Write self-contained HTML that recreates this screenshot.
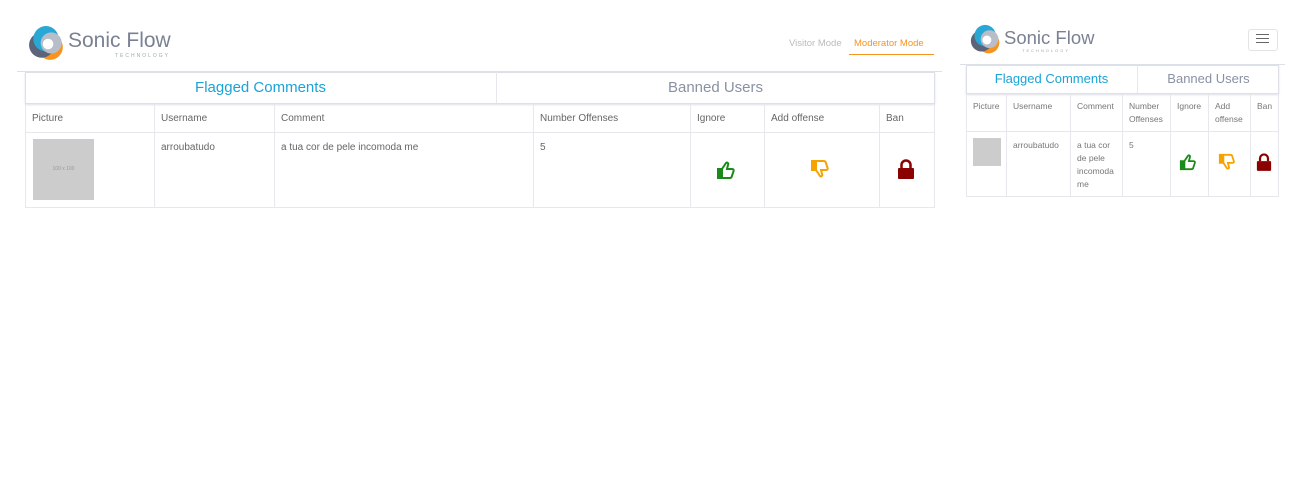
<!DOCTYPE html><html><head><style>
body{margin:0;width:1301px;height:487px;background:#fff;font-family:"Liberation Sans",sans-serif;position:relative;overflow:hidden}
.a{position:absolute}
.t{color:#666;font-size:10px}
.h{color:#666;font-size:10px}
.vl{position:absolute;width:1px;background:#e6e8ee}
.hl{position:absolute;height:1px;background:#e6e8ee}
</style></head><body>
<svg class="a" style="left:28px;top:25px" width="38" height="38" viewBox="0 0 36 36"><circle cx="21" cy="21" r="12" fill="#f7941d"/><circle cx="13" cy="19" r="12" fill="#5b6478"/><circle cx="17" cy="13" r="12" fill="#29a8d6"/><circle cx="22" cy="17" r="10" fill="#b8bec9"/><circle cx="19" cy="18" r="5" fill="#fff"/></svg>
<div class="a" style="left:68px;top:29px;font-size:21px;color:#7a8193">Sonic Flow</div>
<div class="a" style="left:115px;top:53px;font-size:5px;letter-spacing:2px;color:#9aa">TECHNOLOGY</div>
<div class="a" style="left:789px;top:38px;font-size:9.5px;color:#bbb">Visitor Mode</div>
<div class="a" style="left:854px;top:38px;font-size:9.5px;color:#f7941d">Moderator Mode</div>
<div class="a" style="left:849px;top:54px;width:85px;height:1px;background:#f7941d"></div>
<div class="hl" style="left:17px;top:71px;width:925px;background:#dde0e8"></div>
<div class="a" style="left:25px;top:72px;width:908px;height:30px;border:1px solid #dde0e8;box-shadow:0 1px 2px #dde0e8"></div>
<div class="vl" style="left:496px;top:72px;height:31px"></div>
<div class="a" style="left:25px;top:79px;width:471px;text-align:center;font-size:15px;color:#1aa3d6">Flagged Comments</div>
<div class="a" style="left:497px;top:79px;width:437px;text-align:center;font-size:15px;color:#8a91a3">Banned Users</div>
<div class="a" style="left:25px;top:104px;width:908px;height:103px;border:1px solid #e6e8ee;border-top:none"></div>
<div class="hl" style="left:25px;top:132px;width:909px"></div>
<div class="vl" style="left:154px;top:104px;height:103px"></div><div class="vl" style="left:274px;top:104px;height:103px"></div><div class="vl" style="left:533px;top:104px;height:103px"></div><div class="vl" style="left:690px;top:104px;height:103px"></div><div class="vl" style="left:764px;top:104px;height:103px"></div><div class="vl" style="left:879px;top:104px;height:103px"></div>
<div class="a h" style="left:32px;top:113px">Picture</div><div class="a h" style="left:161px;top:113px">Username</div><div class="a h" style="left:281px;top:113px">Comment</div><div class="a h" style="left:540px;top:113px">Number Offenses</div><div class="a h" style="left:697px;top:113px">Ignore</div><div class="a h" style="left:771px;top:113px">Add offense</div><div class="a h" style="left:886px;top:113px">Ban</div>
<div class="a" style="left:33px;top:139px;width:61px;height:61px;background:#ccc;color:#999;font-size:5px;text-align:center;line-height:61px">100 x 100</div>
<div class="a t" style="left:161px;top:142px">arroubatudo</div><div class="a t" style="left:281px;top:142px">a tua cor de pele incomoda me</div><div class="a t" style="left:540px;top:142px">5</div>
<svg class="a" style="left:716px;top:160px" width="20" height="20" viewBox="0 0 20 20"><path d="M2 9h4v9H2z M6 9l4-6c1-1 3 0 2 2l-1 4h5c1.5 0 2 1 1.6 2l-2 6c-.4.8-1 1-2 1H6" fill="none" stroke="#1a8a1a" stroke-width="2"/><rect x="2" y="9" width="4" height="9" fill="#1a8a1a"/></svg>
<svg class="a" style="left:810px;top:159px" width="20" height="20" viewBox="0 0 20 20" transform="scale(1,-1)"><path d="M2 9h4v9H2z M6 9l4-6c1-1 3 0 2 2l-1 4h5c1.5 0 2 1 1.6 2l-2 6c-.4.8-1 1-2 1H6" fill="none" stroke="#f5a300" stroke-width="2"/><rect x="2" y="9" width="4" height="9" fill="#f5a300"/></svg>
<svg class="a" style="left:897px;top:158px" width="18" height="22" viewBox="0 0 18 22"><path d="M4.5 10V7a4.5 4.5 0 0 1 9 0v3" fill="none" stroke="#8b0000" stroke-width="2.5"/><rect x="1" y="10" width="16" height="11" rx="1" fill="#8b0000"/></svg>
<svg class="a" style="left:970px;top:24px" width="32" height="32" viewBox="0 0 36 36"><circle cx="21" cy="21" r="12" fill="#f7941d"/><circle cx="13" cy="19" r="12" fill="#5b6478"/><circle cx="17" cy="13" r="12" fill="#29a8d6"/><circle cx="22" cy="17" r="10" fill="#b8bec9"/><circle cx="19" cy="18" r="5" fill="#fff"/></svg>
<div class="a" style="left:1004px;top:27px;font-size:18.5px;color:#7a8193">Sonic Flow</div>
<div class="a" style="left:1022px;top:48px;font-size:4px;letter-spacing:2px;color:#9aa">TECHNOLOGY</div>
<div class="a" style="left:1248px;top:29px;width:28px;height:20px;border:1px solid #e3e3e3;border-radius:3px"></div>
<div class="a" style="left:1256px;top:34px;width:13px;height:1px;background:#666;box-shadow:0 4px 0 #666,0 8px 0 #666"></div>
<div class="hl" style="left:960px;top:64px;width:325px;background:#dde0e8"></div>
<div class="a" style="left:966px;top:65px;width:311px;height:27px;border:1px solid #dde0e8;box-shadow:0 1px 2px #dde0e8"></div>
<div class="vl" style="left:1137px;top:65px;height:28px"></div>
<div class="a" style="left:966px;top:71px;width:171px;text-align:center;font-size:13px;color:#1aa3d6">Flagged Comments</div>
<div class="a" style="left:1138px;top:71px;width:141px;text-align:center;font-size:13px;color:#8a91a3">Banned Users</div>
<div class="a" style="left:966px;top:94px;width:311px;height:102px;border:1px solid #e6e8ee;border-top:none"></div>
<div class="hl" style="left:966px;top:131px;width:312px"></div>
<div class="vl" style="left:1006px;top:94px;height:102px"></div><div class="vl" style="left:1070px;top:94px;height:102px"></div><div class="vl" style="left:1122px;top:94px;height:102px"></div><div class="vl" style="left:1170px;top:94px;height:102px"></div><div class="vl" style="left:1208px;top:94px;height:102px"></div><div class="vl" style="left:1250px;top:94px;height:102px"></div>
<div class="a" style="font-size:8.5px;color:#777;line-height:13px">
<div class="a" style="left:973px;top:100px">Picture</div><div class="a" style="left:1013px;top:100px">Username</div><div class="a" style="left:1077px;top:100px">Comment</div><div class="a" style="left:1129px;top:100px;width:40px">Number Offenses</div><div class="a" style="left:1177px;top:100px">Ignore</div><div class="a" style="left:1215px;top:100px;width:30px">Add offense</div><div class="a" style="left:1257px;top:100px">Ban</div>
<div class="a" style="left:1013px;top:139px">arroubatudo</div><div class="a" style="left:1077px;top:139px;width:44px">a tua cor de pele incomoda me</div><div class="a" style="left:1129px;top:139px">5</div>
</div>
<div class="a" style="left:973px;top:138px;width:28px;height:28px;background:#ccc"></div>
<svg class="a" style="left:1179px;top:153px" width="18" height="18" viewBox="0 0 20 20"><path d="M2 9h4v9H2z M6 9l4-6c1-1 3 0 2 2l-1 4h5c1.5 0 2 1 1.6 2l-2 6c-.4.8-1 1-2 1H6" fill="none" stroke="#1a8a1a" stroke-width="2"/><rect x="2" y="9" width="4" height="9" fill="#1a8a1a"/></svg>
<svg class="a" style="left:1218px;top:153px" width="18" height="18" viewBox="0 0 20 20" transform="scale(1,-1)"><path d="M2 9h4v9H2z M6 9l4-6c1-1 3 0 2 2l-1 4h5c1.5 0 2 1 1.6 2l-2 6c-.4.8-1 1-2 1H6" fill="none" stroke="#f5a300" stroke-width="2"/><rect x="2" y="9" width="4" height="9" fill="#f5a300"/></svg>
<svg class="a" style="left:1256px;top:152px" width="16" height="20" viewBox="0 0 18 22"><path d="M4.5 10V7a4.5 4.5 0 0 1 9 0v3" fill="none" stroke="#8b0000" stroke-width="2.5"/><rect x="1" y="10" width="16" height="11" rx="1" fill="#8b0000"/></svg>
</body></html>
